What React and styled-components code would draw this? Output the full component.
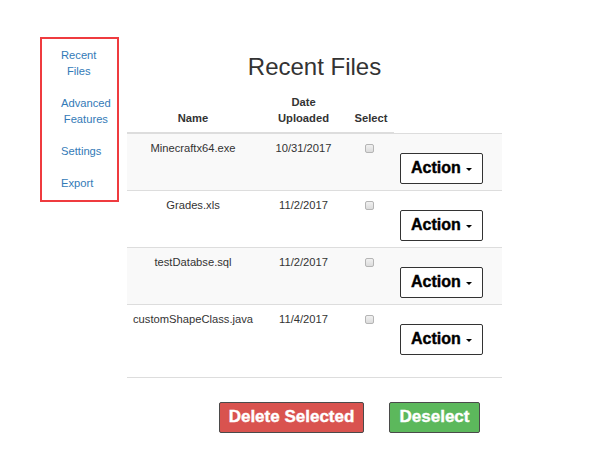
import React from 'react'
import styled, { createGlobalStyle } from 'styled-components'

const GlobalStyle = createGlobalStyle`
  body {
    margin: 0;
    background: #fff;
    font-family: "Liberation Sans", Arial, sans-serif;
    font-size: 11.2px;
    line-height: 16px;
    color: #333;
  }
`

const Page = styled.div`
  display: flex;
  align-items: flex-start;
  width: 589px;
  height: 457px;
`

const Sidebar = styled.nav`
  margin: 37px 0 0 40px;
  width: 79px;
  box-sizing: border-box;
  border: 2px solid #ef3b3f;
  padding: 8px 0 9px 19px;
  display: flex;
  flex-direction: column;
  align-items: flex-start;
  gap: 16px;
`

const NavLink = styled.a`
  display: block;
  width: min-content;
  text-align: center;
  color: #337ab7;
  text-decoration: none;
  cursor: pointer;
`

const Main = styled.main`
  margin: 54px 0 0 8px;
  width: 375px;
`

const Title = styled.h2`
  margin: 0 0 8px;
  text-align: center;
  font-size: 24px;
  line-height: 26px;
  font-weight: 500;
  color: #333;
`

const Table = styled.table`
  width: 375px;
  border-collapse: collapse;
  table-layout: fixed;
  border-bottom: 1px solid #ddd;
`

const Th = styled.th`
  padding: 6px;
  text-align: center;
  vertical-align: bottom;
  font-weight: 700;
  border-bottom: 2px solid #ddd;
`

const Row = styled.tr`
  background: ${({ $striped }) => ($striped ? '#f9f9f9' : '#fff')};
  &:last-child td {
    padding-bottom: 22px;
  }
`

const Td = styled.td`
  padding: 6px;
  text-align: ${({ $align }) => $align || 'center'};
  vertical-align: top;
  border-top: 1px solid #ddd;
  white-space: nowrap;
`

const Check = styled.input`
  appearance: none;
  display: inline-block;
  vertical-align: top;
  width: 9px;
  height: 9px;
  margin: 4px 4px 0 0;
  border: 1px solid #b5b5b5;
  border-radius: 2px;
  background: linear-gradient(#f1f1f1, #dcdcdc);
  box-sizing: border-box;
`

const ActionButton = styled.button`
  margin-top: 13px;
  display: inline-flex;
  align-items: center;
  gap: 5px;
  height: 31px;
  padding: 0 10px;
  border: 1px solid #333;
  border-radius: 2px;
  background: #fff;
  color: #000;
  font-family: "Liberation Sans", Arial, sans-serif;
  font-size: 16px;
  font-weight: 700;
  -webkit-text-stroke: 0.4px #000;
  cursor: pointer;
`

const Caret = styled.span`
  width: 0;
  height: 0;
  border-left: 3px solid transparent;
  border-right: 3px solid transparent;
  border-top: 3px solid #000;
  margin-top: 2px;
`

const Footer = styled.div`
  display: flex;
  gap: 25px;
  margin-top: 24px;
  padding-left: 92px;
`

const SolidButton = styled.button`
  height: 31px;
  width: ${({ $width }) => $width}px;
  padding: 0;
  border: 1px solid #4a4a4a;
  border-radius: 2px;
  background: ${({ $bg }) => $bg};
  color: #fff;
  font-family: "Liberation Sans", Arial, sans-serif;
  font-size: 17px;
  font-weight: 700;
  -webkit-text-stroke: 0.4px #fff;
  cursor: pointer;
`

const files = [
  { name: 'Minecraftx64.exe', date: '10/31/2017' },
  { name: 'Grades.xls', date: '11/2/2017' },
  { name: 'testDatabse.sql', date: '11/2/2017' },
  { name: 'customShapeClass.java', date: '11/4/2017' },
]

export default function App() {
  return (
    <>
      <GlobalStyle />
      <Page>
        <Sidebar>
          <NavLink>Recent Files</NavLink>
          <NavLink>Advanced Features</NavLink>
          <NavLink>Settings</NavLink>
          <NavLink>Export</NavLink>
        </Sidebar>
        <Main>
          <Title>Recent Files</Title>
          <Table>
            <colgroup>
              <col style={{ width: 132 }} />
              <col style={{ width: 89 }} />
              <col style={{ width: 46 }} />
              <col style={{ width: 108 }} />
            </colgroup>
            <thead>
              <tr>
                <Th>Name</Th>
                <Th>Date<br />Uploaded</Th>
                <Th>Select</Th>
              </tr>
            </thead>
            <tbody>
              {files.map((f, i) => (
                <Row key={f.name} $striped={i % 2 === 0}>
                  <Td>{f.name}</Td>
                  <Td>{f.date}</Td>
                  <Td><Check type="checkbox" /></Td>
                  <Td $align="left">
                    <ActionButton>Action<Caret /></ActionButton>
                  </Td>
                </Row>
              ))}
            </tbody>
          </Table>
          <Footer>
            <SolidButton $bg="#d9534f" $width={145}>Delete Selected</SolidButton>
            <SolidButton $bg="#5cb85c" $width={91}>Deselect</SolidButton>
          </Footer>
        </Main>
      </Page>
    </>
  )
}
